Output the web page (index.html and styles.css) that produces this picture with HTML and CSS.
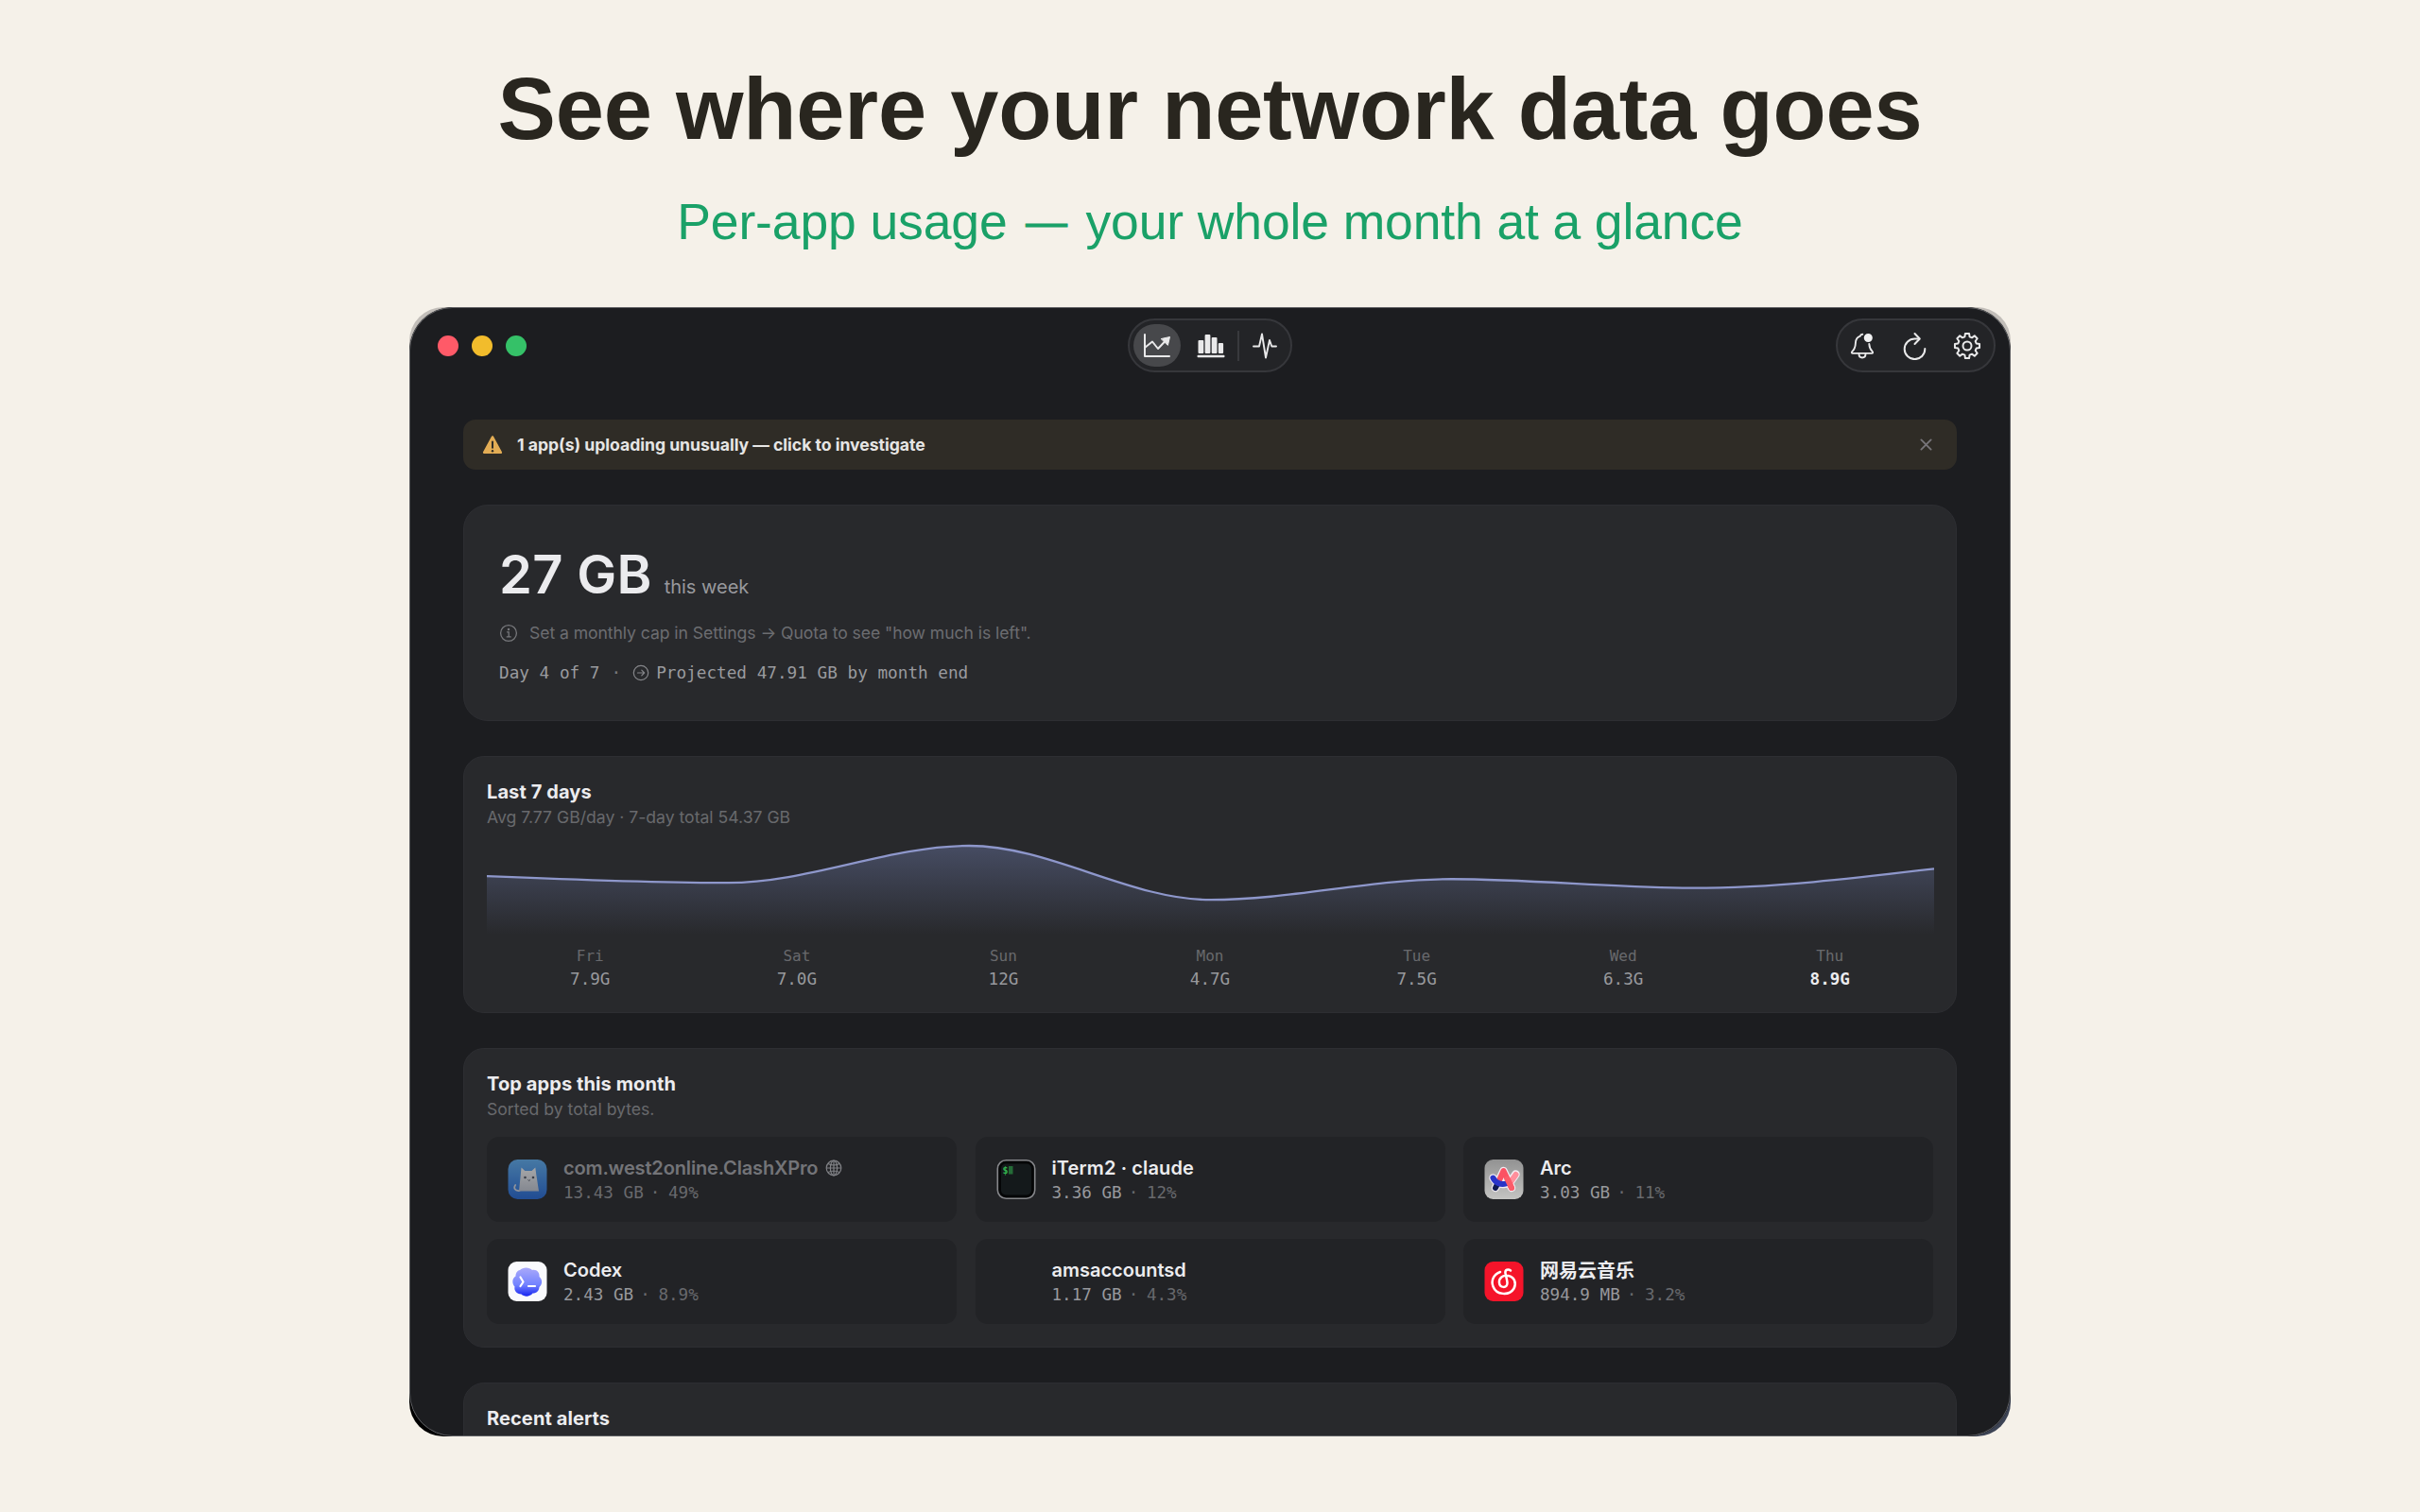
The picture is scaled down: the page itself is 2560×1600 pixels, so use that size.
FILE: index.html
```html
<!DOCTYPE html>
<html lang="en">
<head>
  <meta charset="UTF-8" />
  <meta name="viewport" content="width=device-width, initial-scale=1.0"/>
  <title>See where your network data goes</title>
  <link rel="stylesheet" href="styles.css">
</head>
<body>
  <h1 class="headline">See where your network data goes</h1>
  <p class="tagline">Per-app usage <span class="dash">—</span> your whole month at a glance</p>

  <div class="window">
    <div class="panel">
      <header class="toolbar">
        <div class="lights">
          <span class="light red"></span>
          <span class="light yellow"></span>
          <span class="light green"></span>
        </div>

        <div class="pill tabs">
          <span class="tab active">
            <svg width="30" height="28" viewBox="0 0 30 28" fill="none" stroke="#e9e9ea" stroke-width="2" stroke-linecap="round" stroke-linejoin="round">
              <path d="M2 2v23h26"/>
              <path d="M2.5 15.5 10 9.5l6 7.5 8-8.500"/>
              <path d="M19.500 6.500 28.500 4.500 26.500 13z" fill="#e9e9ea" stroke-width="1"/>
            </svg>
          </span>
          <span class="tab">
            <svg width="30" height="28" viewBox="0 0 30 28" fill="#e9e9ea">
              <rect x="1.500" y="8" width="5.800" height="14" rx="1"/>
              <rect x="8.600" y="2" width="5.800" height="20" rx="1"/>
              <rect x="15.700" y="5" width="5.800" height="17" rx="1"/>
              <rect x="22.800" y="11" width="5.300" height="11" rx="1"/>
              <rect x="0.500" y="23.800" width="29" height="2.400" rx="1"/>
            </svg>
          </span>
          <span class="divider"></span>
          <span class="tab">
            <svg width="28" height="30" viewBox="0 0 28 30" fill="none" stroke="#e9e9ea" stroke-width="1.900" stroke-linecap="round" stroke-linejoin="round">
              <path d="M2 15.500h6l3-13 4 25 4-18.500 2.300 6.500H26"/>
            </svg>
          </span>
        </div>

        <div class="pill actions">
          <svg width="28" height="30" viewBox="0 0 28 30" fill="none" stroke="#e9e9ea" stroke-width="1.900" stroke-linecap="round" stroke-linejoin="round">
            <path d="M14.300 2.700c-1.500.1-2.300 1-2.500 2C8.500 5.800 7 8.600 6.900 12c-.2 5-1.400 7-3.700 9.100-.7.700-.4 1.800.6 1.800h20.400c1 0 1.300-1.100.6-1.800-2.200-2.100-3.300-4-3.500-8.100"/>
            <path d="M10.500 23.500c0 5.300 7 5.300 7 0"/>
            <circle cx="20.300" cy="6.500" r="3.600" fill="#f2f2f3" stroke="#f2f2f3"/>
          </svg>
          <svg width="28" height="30" viewBox="0 0 28 30" fill="none" stroke="#e9e9ea" stroke-width="2" stroke-linecap="round" stroke-linejoin="round">
            <path d="M19 7.500H14.500A10.800 10.800 0 1 0 25.300 18"/>
            <path d="M14.500 2 19.800 7.500 14.500 13"/>
          </svg>
          <svg width="30" height="30" viewBox="0 0 30 30" fill="none" stroke="#e9e9ea" stroke-width="2" stroke-linejoin="round">
            <path id="gear"/>
            <circle cx="15" cy="15" r="4.500"/>
          </svg>
        </div>
      </header>

      <main class="content">
        <div class="banner">
          <svg width="22" height="22" viewBox="0 0 22 22">
            <path d="M11 2.500 19.800 18.800H2.200z" fill="#e3ad55" stroke="#e3ad55" stroke-width="2.600" stroke-linejoin="round"/>
            <path d="M11 7.500v6.300" stroke="#2f2c26" stroke-width="2" stroke-linecap="round"/>
            <circle cx="11" cy="17.200" r="1.200" fill="#2f2c26"/>
          </svg>
          <span class="banner-text">1 app(s) uploading unusually — click to investigate</span>
          <svg class="close" width="13" height="13" viewBox="0 0 14 14" stroke="#77757a" stroke-width="2" stroke-linecap="round">
            <path d="M1.500 1.500l11 11M12.500 1.500l-11 11"/>
          </svg>
        </div>

        <section class="card usage">
          <div class="total"><span class="amount">27 GB</span><span class="period">this week</span></div>
          <div class="hint">
            <svg width="20" height="20" viewBox="0 0 20 20" fill="none" stroke="#77787c" stroke-width="1.300" stroke-linecap="round">
              <circle cx="10" cy="10" r="8.400"/>
              <path d="M8.500 8.800H10.200v5M8.200 13.900h4"/>
              <circle cx="10" cy="5.900" r=".6" fill="#77787c"/>
            </svg>
            <span>Set a monthly cap in Settings → Quota to see "how much is left".</span>
          </div>
          <div class="projection">
            <span>Day 4 of 7</span>
            <span class="dot">·</span>
            <svg width="18" height="18" viewBox="0 0 18 18" fill="none" stroke="#85868a" stroke-width="1.200" stroke-linecap="round" stroke-linejoin="round">
              <circle cx="9" cy="9" r="7.700"/>
              <path d="M5.500 9h7M9.800 6.200 12.600 9l-2.800 2.800"/>
            </svg>
            <span>Projected 47.91 GB by month end</span>
          </div>
        </section>

        <section class="card">
          <h2>Last 7 days</h2>
          <p class="sub">Avg 7.77 GB/day · 7-day total 54.37 GB</p>
          <svg class="chart" width="1531" height="104" viewBox="0 0 1532 104" preserveAspectRatio="none">
            <defs>
              <linearGradient id="fade" gradientUnits="userSpaceOnUse" x1="0" y1="10" x2="0" y2="104">
                <stop offset="0" stop-color="#8090cc" stop-opacity=".34"/>
                <stop offset="1" stop-color="#8090cc" stop-opacity="0"/>
              </linearGradient>
            </defs>
            <path id="area" fill="url(#fade)"/>
            <path id="line" fill="none" stroke="#8e97cb" stroke-width="2.300"/>
          </svg>
          <div class="days" id="days"></div>
        </section>

        <section class="card top-apps">
          <h2>Top apps this month</h2>
          <p class="sub">Sorted by total bytes.</p>
          <div class="apps">
            <div class="app dim">
              <svg width="42" height="44" viewBox="0 0 42 44">
                <defs>
                  <linearGradient id="sky" x1="0" y1="0" x2="0" y2="1"><stop offset="0" stop-color="#5fb2f8"/><stop offset="1" stop-color="#2169dc"/></linearGradient>
                  <linearGradient id="cat" x1="0" y1="0" x2="0" y2="1"><stop offset="0" stop-color="#fff"/><stop offset="1" stop-color="#c5cbd8"/></linearGradient>
                </defs>
                <rect x=".5" y="1" width="41" height="42" rx="10" fill="url(#sky)"/>
                <path d="M12.500 34c-5 .5-6.500-3-4.300-6" fill="none" stroke="#d9dee8" stroke-width="1.700" stroke-linecap="round"/>
                <path d="M14.500 9.500 18.300 13h7.200l3.800-3.500 1 7.500L33 34.500H12L13.800 17z" fill="url(#cat)"/>
                <circle cx="18.500" cy="20" r="1.300" fill="#4d5260"/><circle cx="27" cy="20" r="1.300" fill="#4d5260"/>
                <path d="M21.500 22.500l1.200 1 1.200-1" fill="none" stroke="#4d5260"/>
              </svg>
              <div class="info">
                <div class="name clash"><span>com.west2online.ClashXPro</span>
                  <svg width="18" height="18" viewBox="0 0 18 18" fill="none" stroke="#bfc0c5" stroke-width="1.200">
                    <circle cx="9" cy="9" r="7.800"/><ellipse cx="9" cy="9" rx="3.600" ry="7.800"/><path d="M9 1.400v15.200M1.400 9h15.200M3 4.500q6 3 12 0M3 13.500q6-3 12 0"/>
                  </svg>
                </div>
                <div class="stats">13.43 GB <i>· 49%</i></div>
              </div>
            </div>

            <div class="app">
              <svg width="42" height="44" viewBox="0 0 42 44">
                <rect x="1.300" y="1.800" width="39.400" height="40.400" rx="9" fill="#050607" stroke="#85868a" stroke-width="1.600"/>
                <rect x="5" y="5.500" width="32" height="33" rx="5" fill="#14191b"/>
                <text class="prompt" x="6.500" y="16">$</text>
                <rect x="13" y="8" width="4.500" height="8.500" fill="#246b37"/>
              </svg>
              <div class="info">
                <div class="name iterm">iTerm2 · claude</div>
                <div class="stats">3.36 GB <i>· 12%</i></div>
              </div>
            </div>

            <div class="app">
              <svg width="42" height="44" viewBox="0 0 42 44" fill="none" stroke-linecap="round" stroke-linejoin="round">
                <defs><linearGradient id="silver" x1="0" y1="0" x2="0" y2="1"><stop offset="0" stop-color="#929292"/><stop offset="1" stop-color="#c4c4c2"/></linearGradient></defs>
                <rect x=".5" y="1" width="41" height="42" rx="9" fill="url(#silver)"/>
                <path d="M9.500 20.500C14 28.500 25 29 29 23L33.500 16.500M12 31l8.500-18 8.500 18" stroke="#f2ecf2" stroke-width="8.500"/>
                <path d="M27.500 25.500 33.500 17" stroke="#ff8f9c" stroke-width="6"/>
                <path d="M12 31l3-6" stroke="#101b50" stroke-width="6"/>
                <path d="M16 23 20.500 13 29 31" stroke="#fb5263" stroke-width="6"/>
                <path d="M9.500 20.500c2.500 5.500 8.500 7.500 13.500 6" stroke="#2934c8" stroke-width="6"/>
                <path d="M24.500 21.500 29 31" stroke="#fb5c69" stroke-width="6"/>
              </svg>
              <div class="info">
                <div class="name">Arc</div>
                <div class="stats">3.03 GB <i>· 11%</i></div>
              </div>
            </div>

            <div class="app">
              <svg width="42" height="44" viewBox="0 0 42 44">
                <defs><linearGradient id="violet" x1="0" y1="0" x2="0" y2="1"><stop offset="0" stop-color="#aaa9fa"/><stop offset=".6" stop-color="#7383ff"/><stop offset="1" stop-color="#1724f0"/></linearGradient></defs>
                <rect x=".5" y="1" width="41" height="42" rx="9" fill="#fafafd"/>
                <path d="M13 10C16 6.500 23 6.500 26 10c5-1 8 3 7.500 7 3.500 3 3.500 8 0 11-.5 5-4 6.500-7 6.500-3 4-9 4-12 1-5 0-8-4-7-8-3-3-3-9 1-11 0-3 1.500-6 4.500-6.500z" fill="url(#violet)"/>
                <path d="M13.500 17.500 16.500 22.500 13.500 27M22 27h7" fill="none" stroke="#fff" stroke-width="2.200" stroke-linecap="round" stroke-linejoin="round"/>
              </svg>
              <div class="info">
                <div class="name">Codex</div>
                <div class="stats">2.43 GB <i>· 8.9%</i></div>
              </div>
            </div>

            <div class="app">
              <span class="no-icon"></span>
              <div class="info">
                <div class="name">amsaccountsd</div>
                <div class="stats">1.17 GB <i>· 4.3%</i></div>
              </div>
            </div>

            <div class="app">
              <svg width="42" height="44" viewBox="0 0 42 44" fill="none" stroke="#fff" stroke-width="2.500" stroke-linecap="round">
                <rect x=".5" y="1" width="41" height="42" rx="9" fill="#f5142a" stroke="none"/>
                <path d="M17 12C10 14.500 7 21 9.500 27.500c3.500 9 17 10 22 2 3-5.500.5-12.500-6-13.500-6-1-10 2.500-9.500 7.500.5 5.500 8 6 8.500.5.200-2-1.500-8-2-10.500-.8-4 3-5 5.500-3"/>
              </svg>
              <div class="info">
                <div class="name cjk">网易云音乐</div>
                <div class="stats">894.9 MB <i>· 3.2%</i></div>
              </div>
            </div>
          </div>
        </section>

        <section class="card">
          <h2>Recent alerts</h2>
        </section>
      </main>
    </div>
  </div>

  <script>
    const days = [
      ["Fri", "7.9G", 7.9], ["Sat", "7.0G", 7.0], ["Sun", "12G", 12], ["Mon", "4.7G", 4.7],
      ["Tue", "7.5G", 7.5], ["Wed", "6.3G", 6.3], ["Thu", "8.9G", 8.9]
    ];

    const row = document.getElementById("days");
    for (const [day, label] of days) {
      const cell = document.createElement("div");
      cell.className = "day";
      cell.innerHTML = `<span>${day}</span><b>${label}</b>`;
      row.appendChild(cell);
    }

    // smooth line, flat at every turning point
    const step = 1532 / 6;
    const ys = days.map(d => 104 - 94 * d[2] / 12);
    let path = `M0 ${ys[0]}`;
    for (let i = 1; i < ys.length; i++) {
      const diff = ys[i] - ys[i - 1];
      const c1 = i === 1 ? ys[0] + diff / 2 : ys[i - 1];
      const c2 = i === ys.length - 1 ? ys[i] - diff / 2 : ys[i];
      path += ` C${(i - 1) * step + step / 3} ${c1} ${i * step - step / 3} ${c2} ${i * step} ${ys[i]}`;
    }
    document.getElementById("line").setAttribute("d", path);
    document.getElementById("area").setAttribute("d", path + " V104 H0 Z");

    // settings gear, 8 teeth
    let gear = "";
    for (let i = 0; i < 8; i++) {
      [[-15, 10], [-9, 13.2], [9, 13.2], [15, 10]].forEach(([deg, r]) => {
        const a = (i * 45 + deg) * Math.PI / 180;
        gear += (gear ? "L" : "M") + (15 + r * Math.sin(a)).toFixed(2) + " " + (15 - r * Math.cos(a)).toFixed(2);
      });
    }
    document.getElementById("gear").setAttribute("d", gear + "Z");
  </script>
</body>
</html>
```

FILE: styles.css
```css
* {
  box-sizing: border-box;
}
body {
  margin: 0;
  padding-top: 60px;
  height: 1600px;
  overflow: hidden;
  background: #f5f1e9;
  font-family: Inter, 'Noto Sans CJK SC', sans-serif;
}
h1, h2, p {
  margin: 0;
}
svg {
  display: block;
  flex-shrink: 0;
}
.headline {
  font: bold 92px/110px 'Liberation Sans', Arial, sans-serif;
  letter-spacing: -.2px;
  color: #29261f;
  text-align: center;
}
.tagline {
  margin-top: 33px;
  font: 53.5px/64px 'Liberation Sans', Arial, sans-serif;
  letter-spacing: -.13px;
  color: #1aa168;
  text-align: center;
}
.dash {
  display: inline-block;
  width: 53.5px;
  font-size: 44px;
  line-height: 1;
  vertical-align: 3px;
  -webkit-text-stroke: .8px #1aa168;
}
.window {
  width: 1694px;
  height: 1195px;
  margin: 58px auto 0;
  border-radius: 36px;
  overflow: hidden;
  background: linear-gradient(#c2beb9, #c2beb9) top / 100% 50% no-repeat,
    linear-gradient(to right, #000 50%, #3c4354 50%) bottom / 100% 50% no-repeat;
}
.panel {
  position: relative;
  height: 100%;
  border-radius: 46px;
  overflow: hidden;
  background: #1c1d20;
}
.panel::after {
  content: '';
  position: absolute;
  inset: 0;
  border: 1.5px solid #5e5f62;
  border-radius: 46px;
}

/* toolbar */
.toolbar {
  display: grid;
  grid-template-columns: 1fr auto 1fr;
  align-items: center;
  padding: 12px 15px 0;
}
.lights {
  display: flex;
  gap: 14px;
  margin-left: 15px;
}
.light {
  width: 22px;
  height: 22px;
  border-radius: 50%;
}
.red { background: #ff5a68; }
.yellow { background: #f2bc2c; }
.green { background: #35c168; }
.pill {
  display: flex;
  align-items: center;
  height: 57px;
  border: 2px solid #36373b;
  border-radius: 29px;
  background: #232427;
}
.tabs {
  width: 174px;
  padding-left: 4px;
}
.tab {
  display: flex;
  align-items: center;
  justify-content: center;
  width: 50px;
  height: 45px;
  border-radius: 23px;
}
.tab + .tab {
  width: 63px;
}
.active {
  background: #47484b;
}
.divider {
  width: 2px;
  height: 32px;
  margin-left: -3px;
  background: #38393d;
}
.divider + .tab {
  width: 53px;
}
.actions {
  justify-self: end;
  justify-content: space-between;
  width: 169px;
  margin-right: 1px;
  padding: 0 13px 0 12px;
}

/* content */
.content {
  display: flex;
  flex-direction: column;
  gap: 37px;
  padding: 50px 57px 0;
}
.banner {
  display: flex;
  align-items: center;
  height: 53px;
  padding: 0 26px 0 20px;
  border-radius: 13px;
  background: #2f2c26;
}
.banner-text {
  flex: 1;
  margin-left: 15px;
  font-size: 17.6px;
  font-weight: 700;
  letter-spacing: -.02px;
  color: #e6e5e4;
}
.card {
  height: 272px;
  flex-shrink: 0;
  padding: 25px 24px 0;
  border: 1px solid #2d2e32;
  border-radius: 22px;
  background: #28292c;
}
.top-apps {
  height: 317px;
}
.usage {
  height: 229px;
  padding: 38.5px 37px 0;
  border-radius: 26px;
}
.total {
  display: flex;
  align-items: baseline;
  height: 68px;
}
.amount {
  font-size: 56px;
  line-height: 68px;
  font-weight: 600;
  letter-spacing: .3px;
  color: #ebebee;
}
.period {
  margin-left: 13px;
  font-size: 20px;
  color: #98999d;
}
.hint {
  display: flex;
  align-items: center;
  gap: 12px;
  margin-top: 17.5px;
  font-size: 17.6px;
  line-height: 22px;
  letter-spacing: -.07px;
  color: #6c6d71;
}
.projection {
  display: flex;
  align-items: center;
  margin-top: 20px;
  font: 17.7px/22px 'DejaVu Sans Mono', monospace;
  color: #9a9b9f;
}
.dot {
  margin: 0 12px;
  color: #77787c;
}
.projection svg {
  margin-right: 7px;
}
h2 {
  font-size: 20px;
  line-height: 24px;
  font-weight: 700;
  letter-spacing: .1px;
  color: #ececef;
}
.sub {
  margin-top: 3.5px;
  font-size: 17.6px;
  line-height: 22px;
  color: #68696d;
}
.chart {
  margin-top: 9px;
}
.days {
  display: flex;
  margin-top: 13px;
  font-family: 'DejaVu Sans Mono', monospace;
}
.day {
  display: flex;
  flex: 1;
  flex-direction: column;
  align-items: center;
  gap: 3px;
  font-size: 16px;
  line-height: 20px;
  color: #68696d;
}
.day b {
  font-size: 17.6px;
  line-height: 22px;
  font-weight: normal;
  color: #98999d;
}
.day:last-child b {
  font-weight: bold;
  color: #ececef;
}

/* app tiles */
.apps {
  display: grid;
  grid-template-columns: repeat(3, 1fr);
  gap: 18px 19.5px;
  margin-top: 18.5px;
}
.app {
  display: flex;
  align-items: center;
  gap: 17px;
  height: 90px;
  padding-left: 22px;
  border-radius: 13px;
  background: #222326;
}
.dim > * {
  opacity: .6;
}
.no-icon {
  width: 42px;
}
.name {
  display: flex;
  align-items: center;
  gap: 8px;
  font-size: 20px;
  line-height: 24px;
  font-weight: 600;
  color: #ececef;
}
.clash {
  letter-spacing: -.15px;
  color: #a9aaaf;
}
.iterm {
  letter-spacing: .12px;
}
.cjk {
  font-family: 'Noto Sans CJK SC', sans-serif;
}
.stats {
  margin-top: 3px;
  font: 17.6px/22px 'DejaVu Sans Mono', monospace;
  color: #98999d;
}
.stats i {
  margin-left: -3.5px;
  font-style: normal;
  word-spacing: -2px;
  color: #68696d;
}
.dim .stats i {
  color: #98999d;
}
.prompt {
  font: bold 10px 'DejaVu Sans Mono', monospace;
  fill: #32b34f;
}
```
